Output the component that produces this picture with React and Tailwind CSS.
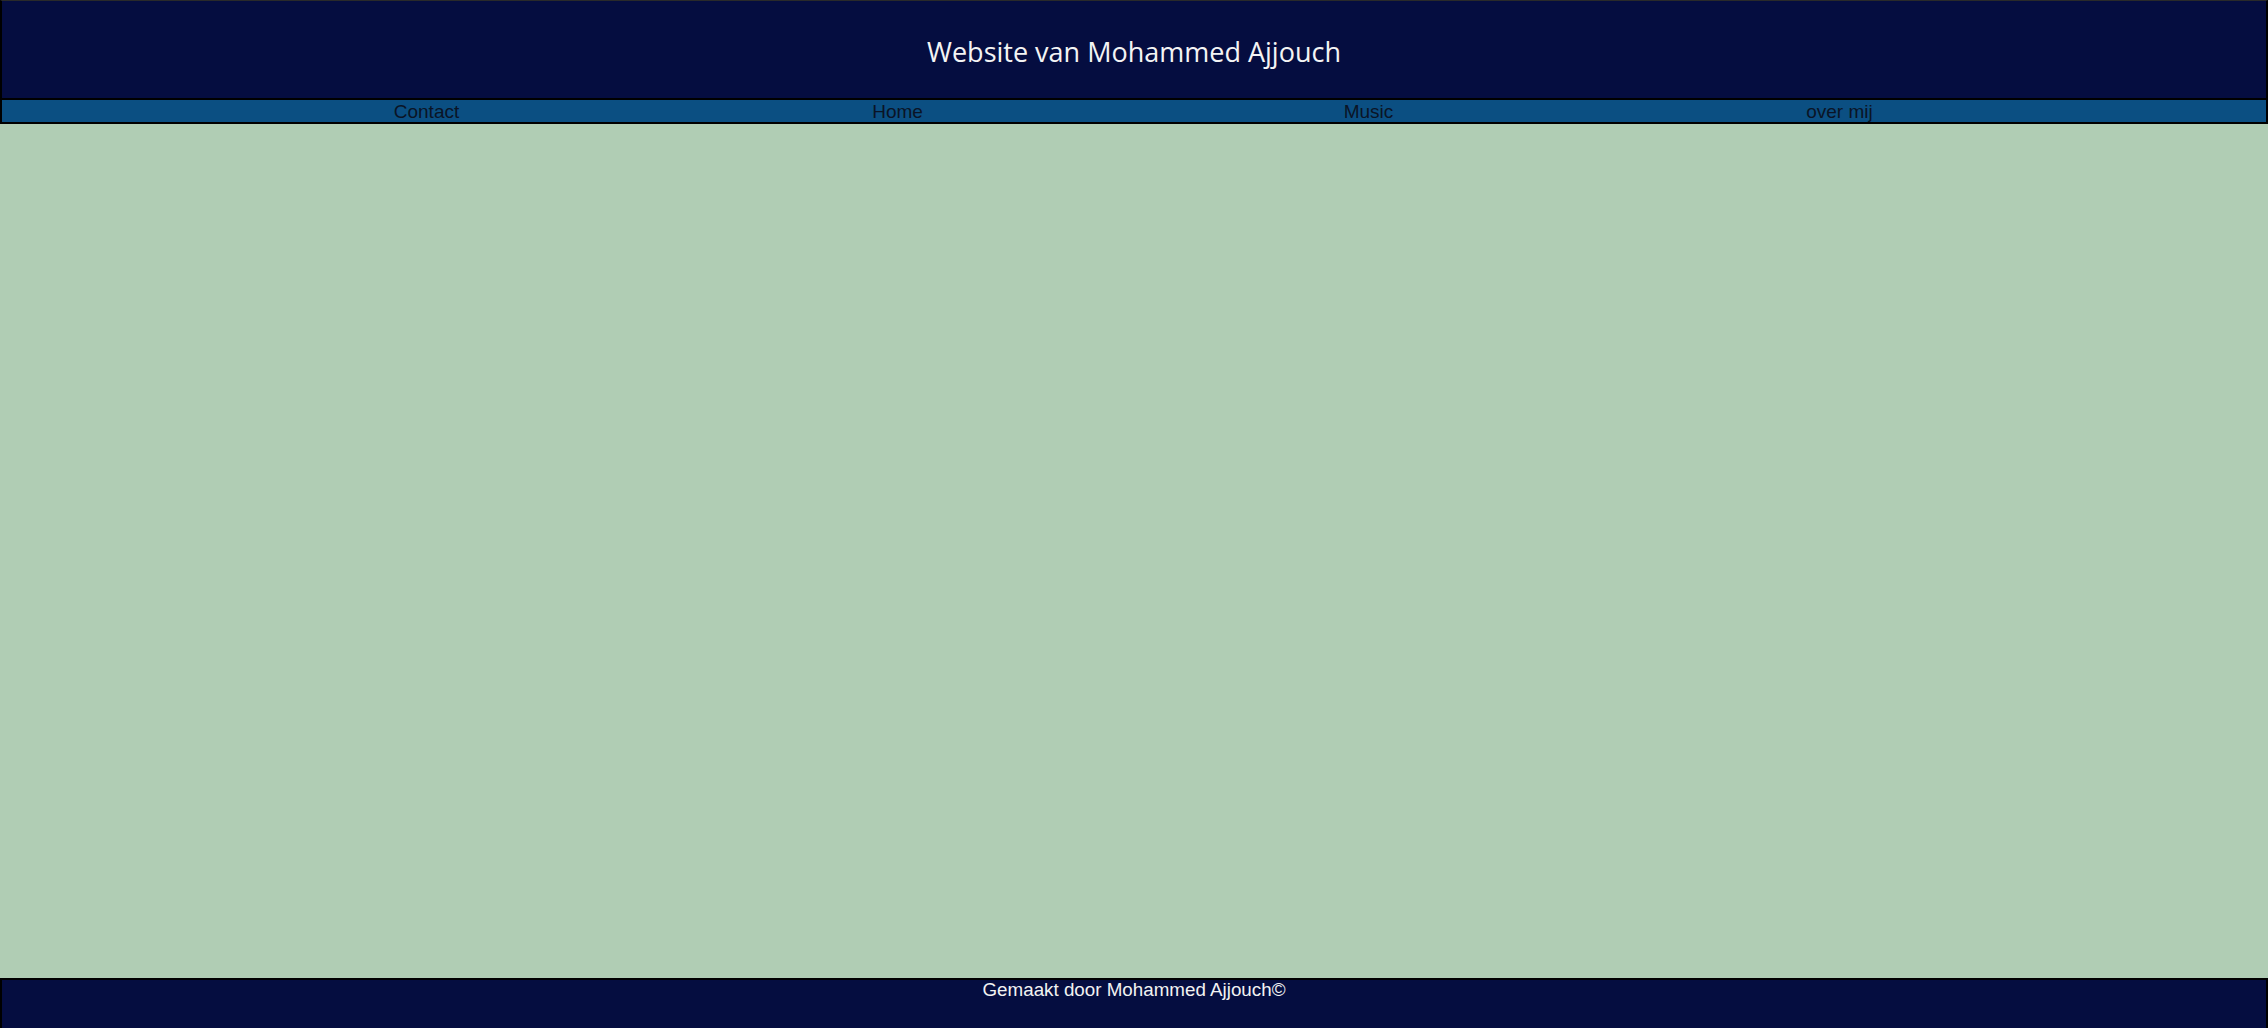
export default function App() {
  const links = ["Contact", "Home", "Music", "over mij"];
  return (
    <div className="flex flex-col h-[1028px] w-[2268px] bg-[#b0cdb4] overflow-hidden">
      <header className="h-[100px] shrink-0 bg-[#050d40] border-2 border-black border-t-[#2a2a2a] border-t flex items-center justify-center pt-[5px]">
        <h1 className="text-[#f4f4f4] text-[27px] font-normal" style={{ fontFamily: '"Open Sans", "Noto Sans", sans-serif' }}>
          Website van Mohammed Ajjouch
        </h1>
      </header>
      <nav className="h-[24px] shrink-0 bg-[#0b4f82] border-x-2 border-b-2 border-black flex items-center pl-[189px]" style={{ fontFamily: '"Liberation Sans", Arial, sans-serif' }}>
        {links.map((l) => (
          <a key={l} className="w-[471px] text-center text-[19px] leading-none text-[#0a1426]">
            {l}
          </a>
        ))}
      </nav>
      <main className="flex-1" />
      <footer className="h-[50px] shrink-0 bg-[#050d40] border-2 border-b-0 border-black flex justify-center">
        <p className="text-[#f2f2f2] text-[18.8px] leading-[20px]" style={{ fontFamily: '"Liberation Sans", Arial, sans-serif' }}>
          Gemaakt door Mohammed Ajjouch©
        </p>
      </footer>
    </div>
  );
}
